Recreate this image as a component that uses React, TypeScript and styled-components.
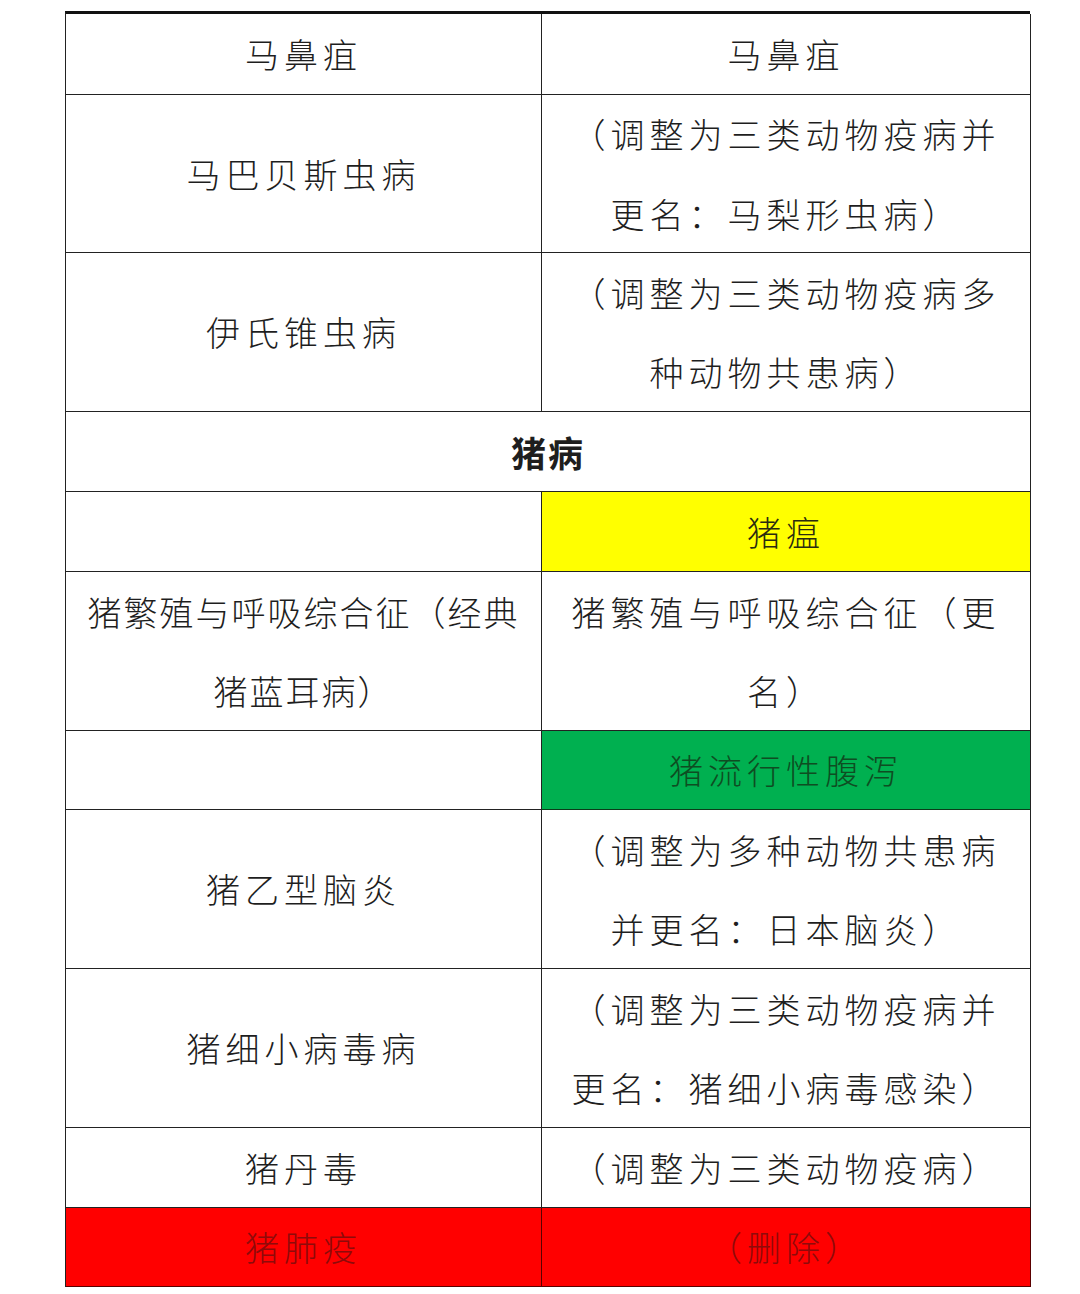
import React from "react";
import styled, { createGlobalStyle } from "styled-components";

const Global = createGlobalStyle`
  html, body { margin: 0; padding: 0; background: #ffffff; }
  body {
    font-family: "Noto Sans CJK SC", "Noto Sans", sans-serif;
    color: #1e1e1e;
  }
`;

const Page = styled.div`
  width: 1080px;
  height: 1294px;
  padding: 11px 0 0 65px;
  box-sizing: border-box;
`;

const Table = styled.div`
  display: grid;
  width: 965px;
  grid-template-columns: 476px 489px;
  grid-template-rows: 81px 158px 159px 80px 80px 159px 79px 159px 159px 80px 79px;
  border-top: 3px solid #111;
  border-left: 1.5px solid #222;
  box-sizing: border-box;
`;

type Tone = "plain" | "yellow" | "green" | "red";

const bg: Record<Tone, string> = {
  plain: "#ffffff",
  yellow: "#ffff00",
  green: "#00b050",
  red: "#ff0000",
};
const fg: Record<Tone, string> = {
  plain: "#1e1e1e",
  yellow: "#2a2a10",
  green: "#0e4d22",
  red: "#8e0a0a",
};

const Cell = styled.div<{ $tone: Tone; $span?: boolean; $bold?: boolean; $ls: number }>`
  grid-column: ${(p) => (p.$span ? "1 / -1" : "auto")};
  background: ${(p) => bg[p.$tone]};
  color: ${(p) => fg[p.$tone]};
  border-right: 1.5px solid ${(p) => (p.$tone === "red" ? "#5a0000" : "#222")};
  border-bottom: 1.5px solid ${(p) => (p.$tone === "red" ? "#5a0000" : p.$tone === "green" ? "#0b3d1a" : "#222")};
  box-sizing: border-box;
  display: flex;
  flex-direction: column;
  align-items: center;
  justify-content: center;
  text-align: center;
  font-size: ${(p) => (p.$bold ? 35 : 34)}px;
  font-weight: ${(p) => (p.$bold ? 700 : 300)};
  letter-spacing: ${(p) => p.$ls}px;
  line-height: 79.5px;
  white-space: nowrap;
`;

const Line = styled.span`
  display: block;
`;

type CellData = { lines: string[]; tone?: Tone; span?: boolean; bold?: boolean; ls?: number };

const rows: CellData[][] = [
  [{ lines: ["马鼻疽"] }, { lines: ["马鼻疽"] }],
  [{ lines: ["马巴贝斯虫病"] }, { lines: ["（调整为三类动物疫病并", "更名：马梨形虫病）"] }],
  [{ lines: ["伊氏锥虫病"] }, { lines: ["（调整为三类动物疫病多", "种动物共患病）"] }],
  [{ lines: ["猪病"], span: true, bold: true, ls: 2 }],
  [{ lines: [""] }, { lines: ["猪瘟"], tone: "yellow" }],
  [
    { lines: ["猪繁殖与呼吸综合征（经典", "猪蓝耳病）"], ls: 2 },
    { lines: ["猪繁殖与呼吸综合征（更", "名）"] },
  ],
  [{ lines: [""] }, { lines: ["猪流行性腹泻"], tone: "green" }],
  [{ lines: ["猪乙型脑炎"] }, { lines: ["（调整为多种动物共患病", "并更名：日本脑炎）"] }],
  [{ lines: ["猪细小病毒病"] }, { lines: ["（调整为三类动物疫病并", "更名：猪细小病毒感染）"] }],
  [{ lines: ["猪丹毒"] }, { lines: ["（调整为三类动物疫病）"] }],
  [{ lines: ["猪肺疫"], tone: "red" }, { lines: ["（删除）"], tone: "red" }],
];

export default function App() {
  return (
    <>
      <Global />
      <Page>
        <Table>
          {rows.map((row, i) =>
            row.map((c, j) => (
              <Cell
                key={`${i}-${j}`}
                $tone={c.tone ?? "plain"}
                $span={c.span}
                $bold={c.bold}
                $ls={c.ls ?? 5}
              >
                {c.lines.map((l, k) => (
                  <Line key={k}>{l || "\u00a0"}</Line>
                ))}
              </Cell>
            ))
          )}
        </Table>
      </Page>
    </>
  );
}
